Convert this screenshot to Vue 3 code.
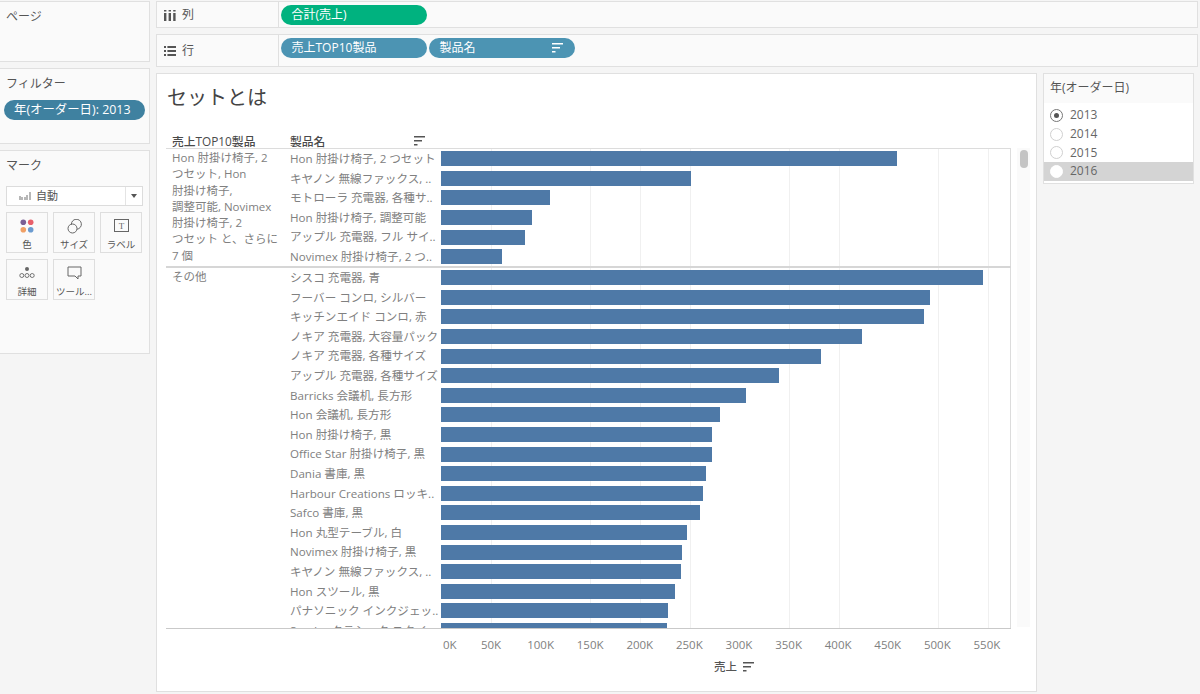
<script setup>
const topRows = [
  ['Hon 肘掛け椅子, 2 つセット', 456],
  ['キヤノン 無線ファックス, ..', 250],
  ['モトローラ 充電器, 各種サ..', 109],
  ['Hon 肘掛け椅子, 調整可能', 91],
  ['アップル 充電器, フル サイ..', 84],
  ['Novimex 肘掛け椅子, 2 つ..', 61]
]
const otherRows = [
  ['シスコ 充電器, 青', 542],
  ['フーバー コンロ, シルバー', 489],
  ['キッチンエイド コンロ, 赤', 483],
  ['ノキア 充電器, 大容量パック', 421],
  ['ノキア 充電器, 各種サイズ', 380],
  ['アップル 充電器, 各種サイズ', 338],
  ['Barricks 会議机, 長方形', 305],
  ['Hon 会議机, 長方形', 279],
  ['Hon 肘掛け椅子, 黒', 271],
  ['Office Star 肘掛け椅子, 黒', 271],
  ['Dania 書庫, 黒', 265],
  ['Harbour Creations ロッキ..', 262],
  ['Safco 書庫, 黒', 259],
  ['Hon 丸型テーブル, 白', 246],
  ['Novimex 肘掛け椅子, 黒', 241],
  ['キヤノン 無線ファックス, ..', 240],
  ['Hon スツール, 黒', 234],
  ['パナソニック インクジェッ..', 227],
  ['Sauder クラシック スタイ..', 226]
]
const topLines = ['Hon 肘掛け椅子, 2', 'つセット, Hon', '肘掛け椅子,', '調整可能, Novimex', '肘掛け椅子, 2', 'つセット と、さらに', '7 個']
const ticks = ['0K','50K','100K','150K','200K','250K','300K','350K','400K','450K','500K','550K']
const years = ['2013','2014','2015','2016']
</script>

<template>
  <div class="app">
    <aside class="side">
      <section class="panel pages"><h3>ページ</h3></section>
      <section class="panel filters">
        <h3>フィルター</h3>
        <div class="filter-pill">年(オーダー日): 2013</div>
      </section>
      <section class="panel marks">
        <h3>マーク</h3>
        <div class="mark-select">
          <svg class="bars-ico" width="12" height="10" viewBox="0 0 12 10"><path d="M1 5v4M3 6v3M6 6v3M8 4v5M11 1v8" stroke="#999" stroke-width="1.4" fill="none"/></svg>
          <span>自動</span>
          <i class="drop"><b></b></i>
        </div>
        <div class="mark-grid">
          <div class="mark-btn">
            <svg width="14" height="14" viewBox="0 0 14 14"><circle cx="3.3" cy="3.3" r="2.8" fill="#7b5f95"/><circle cx="10.7" cy="3.3" r="2.8" fill="#e8606b"/><circle cx="3.3" cy="10.7" r="2.8" fill="#f0a066"/><circle cx="10.7" cy="10.7" r="2.8" fill="#6b9bd0"/></svg>
            <span>色</span>
          </div>
          <div class="mark-btn">
            <svg width="15" height="15" viewBox="0 0 15 15" fill="none" stroke="#666"><path d="M4.4 5.6A5 5 0 1 1 10 10.2"/><circle cx="5.5" cy="9.5" r="4.5"/></svg>
            <span>サイズ</span>
          </div>
          <div class="mark-btn">
            <svg width="15" height="13" viewBox="0 0 15 13" fill="none"><rect x=".5" y=".5" width="14" height="12" stroke="#666"/><text x="7.5" y="10" text-anchor="middle" font-size="9" fill="#666" font-family="Liberation Serif">T</text></svg>
            <span>ラベル</span>
          </div>
          <div class="mark-btn">
            <svg width="16" height="13" viewBox="0 0 16 13" fill="none" stroke="#666" stroke-width=".9"><circle cx="8" cy="3" r="2" fill="#666" stroke="none"/><circle cx="2.8" cy="9.5" r="2"/><circle cx="8" cy="9.5" r="2"/><circle cx="13.2" cy="9.5" r="2"/></svg>
            <span>詳細</span>
          </div>
          <div class="mark-btn">
            <svg width="15" height="14" viewBox="0 0 15 14" fill="none" stroke="#666"><path d="M1 1h13v9h-3v3l-3-3H1z" stroke-linejoin="round"/></svg>
            <span>ツール...</span>
          </div>
        </div>
      </section>
    </aside>

    <main class="center">
      <div class="shelves">
        <div class="shelf cols">
          <div class="shelf-label">
            <svg width="12" height="12" viewBox="0 0 12 12" fill="#555"><path d="M0 3h2.4v8H0zM0 0h2.4v1.6H0zM4.6 3H7v8H4.6zM4.6 0H7v1.6H4.6zM9.2 3h2.4v8H9.2zM9.2 0h2.4v1.6H9.2z"/></svg>
            <span>列</span>
          </div>
          <div class="pills"><div class="pill green">合計(売上)</div></div>
        </div>
        <div class="shelf rows">
          <div class="shelf-label">
            <svg width="12" height="12" viewBox="0 0 12 12" fill="#555"><path d="M0 1h2v2H0zM3.4 1H12v2H3.4zM0 5h2v2H0zM3.4 5H12v2H3.4zM0 9h2v2H0zM3.4 9H12v2H3.4z"/></svg>
            <span>行</span>
          </div>
          <div class="pills">
            <div class="pill teal">売上TOP10製品</div>
            <div class="pill teal">製品名
              <svg class="sort" width="11" height="10" viewBox="0 0 11 10" fill="#fff"><path d="M0 0h11v1.6H0zM0 4h8v1.6H0zM0 8h3.5v1.6H0z"/></svg>
            </div>
          </div>
        </div>
      </div>

      <div class="lower">
        <div class="sheet">
          <h1>セットとは</h1>
          <div class="head">
            <div class="h1c">売上TOP10製品</div>
            <div class="h2c">製品名
              <svg width="11" height="10" viewBox="0 0 11 10" fill="#555"><path d="M0 0h11v1.6H0zM0 4h8v1.6H0zM0 8h3.5v1.6H0z"/></svg>
            </div>
          </div>
          <div class="chart-wrap">
            <div class="table">
              <div class="pane top">
                <div class="group"><div v-for="l in topLines" :key="l">{{ l }}</div></div>
                <div class="rowset">
                  <div v-for="r in topRows" :key="r[0]" class="row">
                    <div class="name">{{ r[0] }}</div>
                    <div class="track"><div class="bar" :style="{ width: r[1] + 'px' }"></div></div>
                  </div>
                </div>
              </div>
              <div class="pane bottom">
                <div class="group other">その他</div>
                <div class="rowset">
                  <div v-for="r in otherRows" :key="r[0]" class="row">
                    <div class="name">{{ r[0] }}</div>
                    <div class="track"><div class="bar" :style="{ width: r[1] + 'px' }"></div></div>
                  </div>
                </div>
              </div>
            </div>
            <div class="scroll"><div class="thumb"></div></div>
          </div>
          <div class="axis"><span v-for="t in ticks" :key="t">{{ t }}</span></div>
          <div class="axis-title">売上
            <svg width="11" height="10" viewBox="0 0 11 10" fill="#555"><path d="M0 0h11v1.6H0zM0 4h8v1.6H0zM0 8h3.5v1.6H0z"/></svg>
          </div>
        </div>

        <div class="legend">
          <div class="legend-title">年(オーダー日)</div>
          <div class="options">
            <div v-for="(y, i) in years" :key="y" class="opt" :class="{ hover: i === 3 }">
              <i class="radio" :class="{ on: i === 0 }"></i>{{ y }}
            </div>
          </div>
        </div>
      </div>
    </main>
  </div>
</template>

<style>
html, body { margin: 0; background: #f5f5f5; }
</style>

<style scoped>
.app {
  width: 1200px; height: 694px; overflow: hidden; display: flex; box-sizing: border-box;
  background: #f5f5f5; color: #555; font: 12px/1.2 "Open Sans", "Noto Sans CJK JP", sans-serif;
}
.side { width: 150px; flex: none; padding-top: 1px; display: flex; flex-direction: column; gap: 6px; }
.panel {
  background: #fafafa; border: 1px solid #e0e0e0; border-left: 0; box-sizing: border-box; padding: 7px 6px 6px;
}
.panel h3 { margin: 0; font-weight: 400; font-size: 12px; line-height: 16px; color: #555; }
.pages { height: 61px; }
.filters { height: 76px; }
.marks { height: 204px; }
.filter-pill {
  margin: 8px 0 0 -2px; height: 20px; width: 141px; border-radius: 10px; background: #3f81a0;
  color: #fff; line-height: 20px; padding-left: 10px; box-sizing: border-box; font-size: 12.4px;
}
.mark-select {
  margin-top: 12px; height: 20px; width: 137px; box-sizing: border-box; border: 1px solid #dcdcdc;
  background: #fff; display: flex; align-items: center; font-size: 11px; position: relative;
}
.bars-ico { margin: 0 5px 0 12px; }
.drop { position: absolute; right: 0; top: 0; bottom: 0; width: 16px; border-left: 1px solid #e4e4e4; display: flex; align-items: center; justify-content: center; }
.drop b { border: 3.5px solid transparent; border-top: 4px solid #555; border-bottom: 0; }
.mark-grid { display: grid; grid-template-columns: repeat(3, 42px); gap: 6px 5px; margin-top: 6px; }
.mark-btn {
  height: 41px; box-sizing: border-box; border: 1px solid #dedede; background: #fafafa;
  display: flex; flex-direction: column; align-items: center; justify-content: space-between; padding: 6px 0 1px;
  font-size: 9.5px; color: #555; white-space: nowrap;
}
.mark-btn span { line-height: 13px; }
.center { flex: none; width: 1050px; display: flex; flex-direction: column; margin-left: 6px; padding-top: 1px; }
.shelves { display: flex; flex-direction: column; gap: 6px; }
.shelf { display: flex; border: 1px solid #e0e0e0; background: #fafafa; box-sizing: border-box; width: 1042px; }
.shelf.cols { height: 27px; }
.shelf.rows { height: 33px; }
.shelf-label { width: 122px; flex: none; border-right: 1px solid #e0e0e0; display: flex; align-items: center; gap: 6px; padding-left: 7px; box-sizing: border-box; color: #555; }
.cols .shelf-label { padding-top: 2px; }
.rows .shelf-label { padding-top: 1px; }
.pills { display: flex; gap: 2px; padding: 3px 0 0 2px; }
.pill {
  width: 146px; height: 20px; border-radius: 10px; color: #fff; line-height: 20px; padding-left: 10.5px;
  box-sizing: border-box; position: relative; font-size: 12px;
}
.green { background: #00b27f; }
.teal { background: #4c94b3; }
.sort { position: absolute; right: 12px; top: 5px; }
.lower { display: flex; gap: 6px; margin-top: 6px; }
.sheet { width: 881px; height: 619px; box-sizing: border-box; border: 1px solid #e0e0e0; background: #fff; padding: 0 0 0 9px; flex: none; }
.sheet h1 { margin: 0; font-weight: 400; font-size: 20px; line-height: 26px; padding: 11px 0 0 1px; color: #444; height: 47px; box-sizing: border-box; }
.head { display: flex; height: 27px; align-items: flex-end; font-weight: 500; color: #4a4a4a; }
.h1c { width: 124px; padding: 0 0 0 6px; box-sizing: border-box; font-size: 11.8px; line-height: 14px; }
.h2c { width: 137px; font-size: 11.8px; line-height: 14px; display: flex; align-items: center; justify-content: space-between; padding-right: 2px; box-sizing: border-box; }
.chart-wrap { display: flex; height: 480px; }
.table { width: 845px; height: 479px; overflow: hidden; border-top: 1px solid #dcdcdc; border-bottom: 1px solid #c9c9c9; box-sizing: content-box; flex: none; }
.pane { display: flex; }
.pane.top { height: 117px; border-bottom: 2px solid #d6d6d6; box-sizing: content-box; overflow: hidden; }
.pane.bottom { height: 361px; }
.group { width: 124px; flex: none; padding: 1px 0 0 6px; box-sizing: border-box; color: #808080; line-height: 16.3px; font-size: 11.5px; }
.other { padding-top: 1px; }
.rowset { flex: 1; min-width: 0; }
.row { display: flex; height: 19.6px; align-items: stretch; }
.name { width: 151px; flex: none; color: #808080; line-height: 20px; white-space: nowrap; overflow: hidden; font-size: 11.6px; }
.track {
  flex: 1; display: flex; align-items: center; border-right: 1px solid #dcdcdc; box-sizing: border-box;
  background-image: repeating-linear-gradient(90deg, transparent 0, transparent 49px, #f0f0f0 49px, #f0f0f0 49.7px);
  background-position: 1px 0;
}
.bar { height: 15px; background: #4e79a7; }
.scroll { width: 13px; margin-left: 6px; background: #fafafa; height: 479px; box-sizing: border-box; padding: 2px 2px; }
.thumb { width: 8px; height: 18px; border-radius: 4px; background: #c4c4c4; margin-left: 1px; }
.axis { display: flex; margin: 0 0 0 275px; color: #808080; font-size: 11.5px; line-height: 16px; padding-top: 9px; }
.axis span { width: 49.6px; text-align: center; flex: none; }
.axis span:first-child { width: 17px; text-align: left; padding-left: 2px; box-sizing: border-box; margin-right: 8.2px; }
.axis-title { margin: 7px 0 0 548px; display: flex; align-items: center; gap: 6px; font-size: 11.5px; color: #555; font-weight: 500; }
.legend { width: 151px; height: 111px; box-sizing: border-box; border: 1px solid #e0e0e0; background: #fff; flex: none; }
.legend-title { height: 29px; background: #fafafa; line-height: 28px; padding-left: 6px; color: #555; }
.options { padding-top: 3px; }
.opt { height: 18.7px; display: flex; align-items: center; padding-left: 6px; color: #666; }
.opt.hover { background: #d4d4d4; }
.radio { width: 11px; height: 11px; border-radius: 50%; border: 1px solid #d0d0d0; background: #fff; margin-right: 7px; position: relative; flex: none; }
.hover .radio { border-color: #fff; }
.radio.on { border-color: #777; }
.radio.on::after { content: ""; position: absolute; left: 3px; top: 3px; width: 5px; height: 5px; border-radius: 50%; background: #555; }
</style>
